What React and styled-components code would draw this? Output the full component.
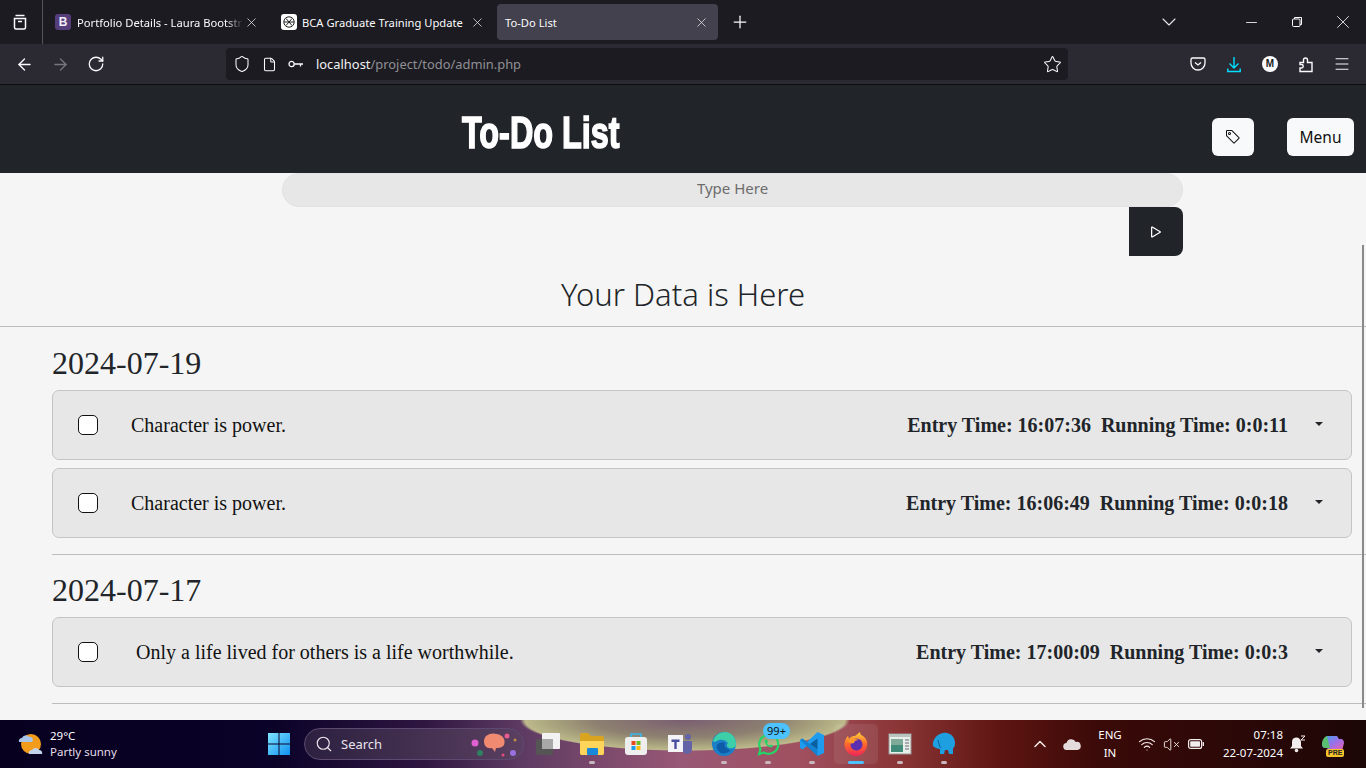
import styled, { createGlobalStyle } from "styled-components";
import {
  ArrowLeft,
  ArrowRight,
  RotateCw,
  Shield,
  File,
  Star,
  Menu as MenuIcon,
  ChevronDown,
  ChevronUp,
  Minus,
  X,
  Plus,
  Search as SearchIcon,
  Wifi,
  VolumeX,
} from "lucide-react";

const DATA = [
  {
    date: "2024-07-19",
    items: [
      { text: "Character is power.", entry: "16:07:36", run: "0:0:11" },
      { text: "Character is power.", entry: "16:06:49", run: "0:0:18" },
    ],
  },
  {
    date: "2024-07-17",
    items: [
      {
        text: "Only a life lived for others is a life worthwhile.",
        entry: "17:00:09",
        run: "0:0:3",
        indent: 5,
      },
    ],
  },
];

function App() {
  return (
    <>
      <GlobalStyle />
      <Screen>
        <TabBar>
          <ViewSlot>
            <svg width="18" height="18" viewBox="0 0 18 18" fill="none" stroke="#fbfbfe" strokeWidth="1.5">
              <path d="M3.5 5.5h11v9a1.5 1.5 0 0 1-1.5 1.5H5a1.5 1.5 0 0 1-1.5-1.5z" />
              <path d="M4.5 2.5h9" />
              <path d="M7 8.5h4" />
            </svg>
          </ViewSlot>
          <Tab>
            <BootstrapIcon>B</BootstrapIcon>
            <TabTitle $fade>Portfolio Details - Laura Bootstr</TabTitle>
            <X size={15} strokeWidth={1.2} color="#e8e8ea" />
          </Tab>
          <Tab>
            <ChatIcon>
              <svg width="14" height="14" viewBox="0 0 14 14" fill="none" stroke="#222" strokeWidth="1">
                <circle cx="7" cy="7" r="5.2" />
                <path d="M4 3.5l6 7M10 3.5l-6 7M2 7h10" />
              </svg>
            </ChatIcon>
            <TabTitle>BCA Graduate Training Update</TabTitle>
            <X size={15} strokeWidth={1.2} color="#e8e8ea" />
          </Tab>
          <Tab $active>
            <TabTitle>To-Do List</TabTitle>
            <X size={15} strokeWidth={1.2} color="#e8e8ea" />
          </Tab>
          <NewTab>
            <Plus size={20} strokeWidth={1.5} color="#fbfbfe" />
          </NewTab>
          <WindowControls>
            <WinButton $gap>
              <ChevronDown size={24} strokeWidth={1.1} color="#e8e8ea" />
            </WinButton>
            <WinButton>
              <Minus size={17} strokeWidth={1.2} color="#fbfbfe" />
            </WinButton>
            <WinButton>
              <svg width="12" height="12" viewBox="0 0 12 12" fill="none" stroke="#fbfbfe" strokeWidth="1">
                <rect x="1.5" y="3" width="7.5" height="7.5" rx="1" />
                <path d="M3.5 3V1.5h7v7H9" />
              </svg>
            </WinButton>
            <WinButton>
              <X size={22} strokeWidth={0.9} color="#fbfbfe" />
            </WinButton>
          </WindowControls>
        </TabBar>

        <ToolBar>
          <NavGroup>
            <NavButton>
              <ArrowLeft size={19} strokeWidth={1.7} color="#fbfbfe" />
            </NavButton>
            <NavButton>
              <ArrowRight size={19} strokeWidth={1.7} color="#77767c" />
            </NavButton>
            <NavButton>
              <RotateCw size={18} strokeWidth={1.7} color="#fbfbfe" />
            </NavButton>
          </NavGroup>
          <UrlBar>
            <Shield size={18} strokeWidth={1.4} color="#fbfbfe" />
            <File size={15} strokeWidth={1.7} color="#fbfbfe" />
            <svg width="16" height="10" viewBox="0 0 16 10" fill="none" stroke="#fbfbfe" strokeWidth="1.3">
              <circle cx="3.6" cy="5" r="2.6" />
              <path d="M6.2 5H15M12.5 5v2.5" />
            </svg>
            <Url>
              localhost<span>/project/todo/admin.php</span>
            </Url>
            <UrlStar>
              <Star size={19} strokeWidth={1.3} color="#fbfbfe" />
            </UrlStar>
          </UrlBar>
          <ToolIcons>
            <ToolIcon>
              <svg width="16" height="16" viewBox="0 0 16 16" fill="none" stroke="#fbfbfe" strokeWidth="1.3">
                <path d="M2.5 2h11A1.5 1.5 0 0 1 15 3.500V7a7 7 0 0 1-14 0V3.500A1.500 1.500 0 0 1 2.500 2z" />
                <path d="M5 6.500l3 2.500 3-2.500" />
              </svg>
            </ToolIcon>
            <ToolIcon>
              <svg width="16" height="17" viewBox="0 0 16 17" fill="none" stroke="#00ddff" strokeWidth="1.4">
                <path d="M8 1v10.500M3.500 7.500L8 12l4.500-4.500" />
                <path d="M1.800 12.500v3h12.400v-3" />
              </svg>
            </ToolIcon>
            <ToolIcon>
              <Avatar>M</Avatar>
            </ToolIcon>
            <ToolIcon>
              <svg width="16" height="17" viewBox="0 0 16 17" fill="none" stroke="#fbfbfe" strokeWidth="1.4">
                <path d="M2 6.500h3.500V4a2 2 0 1 1 4 0v2.500h4.500V15.500H2V12h1.500a1.700 1.700 0 0 0 0-3.500H2z" />
              </svg>
            </ToolIcon>
            <ToolIcon>
              <MenuIcon size={18} strokeWidth={1.3} color="#fbfbfe" />
            </ToolIcon>
          </ToolIcons>
        </ToolBar>

        <Header>
          <Brand>To-Do List</Brand>
          <TagButton>
            <svg width="16" height="16" viewBox="0 0 16 16" fill="#111">
              <path d="M6 4.500a1.500 1.500 0 1 1-3 0 1.500 1.500 0 0 1 3 0m-1 0a.5.5 0 1 0-1 0 .5.5 0 0 0 1 0" />
              <path d="M2 1h4.586a1 1 0 0 1 .707.293l7 7a1 1 0 0 1 0 1.414l-4.586 4.586a1 1 0 0 1-1.414 0l-7-7A1 1 0 0 1 1 6.586V2a1 1 0 0 1 1-1m0 5.586 7 7L13.586 9l-7-7H2z" />
            </svg>
          </TagButton>
          <MenuButton>Menu</MenuButton>
        </Header>

        <Main>
          <Scrollbar />
          <EntryForm>
            <EntryInput placeholder="Type Here" />
            <SubmitButton>
              <svg width="20" height="20" viewBox="0 0 16 16" fill="#fff">
                <path d="M10.804 8 5 4.633v6.734zm.792-.696a.802.802 0 0 1 0 1.392l-6.363 3.692C4.713 12.690 4 12.345 4 11.692V4.308c0-.653.713-.998 1.233-.696z" />
              </svg>
            </SubmitButton>
          </EntryForm>
          <Heading>Your Data is Here</Heading>
          <Rule />
          {DATA.map((group) => (
            <Group key={group.date}>
              <DateTitle>{group.date}</DateTitle>
              {group.items.map((item) => (
                <Card key={item.entry}>
                  <Check />
                  <CardText $indent={item.indent}>{item.text}</CardText>
                  <Times>
                    Entry Time: {item.entry}&nbsp;&nbsp;Running Time: {item.run}
                  </Times>
                  <Caret />
                </Card>
              ))}
              <GroupRule />
            </Group>
          ))}
        </Main>

        <Taskbar>
          <Weather>
            <svg width="26" height="26" viewBox="0 0 26 26">
              <circle cx="14" cy="13" r="10" fill="#f39c1c" />
              <path d="M2 11a3 3 0 0 1 3-4 4 4 0 0 1 7-1 3 3 0 0 1 3 5z" fill="#a9c6e8" />
              <path d="M12 23a3 3 0 0 1 3-4 4 4 0 0 1 7 0 3 3 0 0 1 3 4z" fill="#c3d4ea" />
            </svg>
            <WeatherText>
              <strong>29°C</strong>
              <span>Partly sunny</span>
            </WeatherText>
          </Weather>
          <StartSlot>
            <svg width="22" height="22" viewBox="0 0 22 22">
              <defs>
                <linearGradient id="win" x1="0" y1="0" x2="1" y2="1">
                  <stop offset="0" stopColor="#7fe6ff" />
                  <stop offset="1" stopColor="#0f90f0" />
                </linearGradient>
              </defs>
              <path d="M0 0h10.500v10.500H0zM11.500 0H22v10.500H11.500zM0 11.500h10.500V22H0zM11.500 11.500H22V22H11.500z" fill="url(#win)" />
            </svg>
          </StartSlot>
          <SearchBox>
            <SearchIcon size={18} strokeWidth={1.5} color="#f0eaf2" />
            <span>Search</span>
            <SearchArt>
              <svg width="50" height="28" viewBox="0 0 50 28">
                <path d="M14 11c0-6 7-9 13-7 6 1 9 6 7 11-2 3-6 3-8 3l-1 4-3-4c-5 1-8-2-8-7z" fill="#f08a70" />
                <circle cx="5" cy="13" r="3.500" fill="#e060d0" />
                <circle cx="37" cy="6" r="2.500" fill="#e85a90" />
                <circle cx="43" cy="23" r="3" fill="#9a70e0" />
                <circle cx="10" cy="23" r="3" fill="#2f8060" />
                <circle cx="33" cy="25" r="1.500" fill="#e84a80" />
                <circle cx="45" cy="10" r="1.500" fill="#c09040" />
              </svg>
            </SearchArt>
          </SearchBox>
          <Pinned>
            <AppSlot>
              <svg width="26" height="24" viewBox="0 0 26 24">
                <rect x="1" y="7" width="17" height="16" rx="2" fill="#555" />
                <rect x="7" y="1" width="18" height="16" rx="1" fill="#f2f2f2" />
                <rect x="7" y="7" width="11" height="10" fill="#a8a8a8" />
              </svg>
            </AppSlot>
            <AppSlot $dot>
              <svg width="26" height="24" viewBox="0 0 26 24">
                <path d="M1 3a2 2 0 0 1 2-2h6l3 3h11a2 2 0 0 1 2 2v15a2 2 0 0 1-2 2H3a2 2 0 0 1-2-2z" fill="#d9a520" />
                <path d="M1 9h24v12a2 2 0 0 1-2 2H3a2 2 0 0 1-2-2z" fill="#ffd45a" />
                <rect x="8" y="16" width="11" height="7" rx="1" fill="#1a88d8" />
              </svg>
            </AppSlot>
            <AppSlot>
              <svg width="24" height="24" viewBox="0 0 24 24">
                <path d="M7 5V2h10v3" fill="none" stroke="#35b8f0" strokeWidth="1.600" />
                <rect x="1" y="5" width="22" height="18" rx="3" fill="#eee" />
                <rect x="7.500" y="9" width="4" height="4" fill="#e8491d" />
                <rect x="12.500" y="9" width="4" height="4" fill="#6cbb2a" />
                <rect x="7.500" y="14" width="4" height="4" fill="#1c9ce8" />
                <rect x="12.500" y="14" width="4" height="4" fill="#fcbc10" />
              </svg>
            </AppSlot>
            <AppSlot>
              <svg width="26" height="24" viewBox="0 0 26 24">
                <circle cx="21" cy="5" r="3" fill="#6264a7" />
                <path d="M14 9h11v8a5 5 0 0 1-10 0z" fill="#6264a7" />
                <rect x="1" y="3" width="15" height="17" fill="#f4f4f8" />
                <path d="M4.500 7.500h8V10h-2.800v7H7.300v-7H4.500z" fill="#4b4da0" />
              </svg>
            </AppSlot>
            <AppSlot $dot>
              <svg width="24" height="24" viewBox="0 0 24 24">
                <circle cx="12" cy="12" r="12" fill="#1b7fc8" />
                <path d="M1 9C3 3 8 0 13 0c6 0 11 5 11 12 0 4-4 5-7 4-2-1-3-3-1-5-2-3-6-4-9-3-3 1-5 3-6 1z" fill="#3dd0a8" />
                <path d="M5 13c1-2 5-3 8-2-1 2 0 5 3 6 1 1 2 1 3 1-3 3-7 4-10 3-3-2-5-5-4-8z" fill="#0e5ca8" />
              </svg>
            </AppSlot>
            <AppSlot $dot>
              <svg width="24" height="24" viewBox="0 0 24 24" fill="none">
                <path d="M3 22l1.500-5A9.500 9.500 0 1 1 8 20.500z" stroke="#25d366" strokeWidth="2.200" />
                <path d="M8.500 8c0 4 3.500 7.500 7.500 7.500l1-2-2.500-1-1 1c-1.200-.6-2-1.500-2.500-2.500l1-1-1-2.500z" fill="#25d366" />
              </svg>
              <Badge>99+</Badge>
            </AppSlot>
            <AppSlot $dot>
              <svg width="24" height="24" viewBox="0 0 24 24">
                <path d="M17.500 0L24 3v18l-6.500 3L7 14l-4.500 3.500L0 16V8l2.500-1.500L7 10z" fill="#1f9cf0" />
                <path d="M17.500 6.500v11L10 12z" fill="#0a5f9e" />
                <path d="M0 8l2.500-1.500L17.500 18v6L0 8z" fill="#0e78c4" opacity="0.700" />
              </svg>
            </AppSlot>
            <AppSlot $active>
              <svg width="24" height="24" viewBox="0 0 24 24">
                <defs>
                  <linearGradient id="fox" x1="0.500" y1="0" x2="0.500" y2="1">
                    <stop offset="0" stopColor="#ffd23a" />
                    <stop offset="0.500" stopColor="#ff6a2a" />
                    <stop offset="1" stopColor="#f0245a" />
                  </linearGradient>
                </defs>
                <path d="M12 24A11.500 11.500 0 0 1 1 9c1-3 2-4 3-5l1 3c2-3 4-3 6-3l5-4c0 2 1 3 3 4 3 2 5 6 4 10-1 6-6 10-11 10z" fill="url(#fox)" />
                <circle cx="12.500" cy="12.500" r="6" fill="#5b2fb0" />
                <path d="M4 9c3-2 7-3 11-1-3 0-5 1-5 3-3 1-4 0-6-2z" fill="#ff9a2a" />
              </svg>
            </AppSlot>
            <AppSlot $dot>
              <svg width="24" height="22" viewBox="0 0 24 22">
                <rect x="1" y="1" width="22" height="20" fill="#e8eee8" stroke="#999" />
                <rect x="1" y="1" width="22" height="3" fill="#b8c4c0" />
                <rect x="3" y="6" width="12" height="13" fill="#3f8a78" />
                <rect x="3" y="6" width="12" height="6" fill="#7faa98" />
                <path d="M17 7h4M17 10h4M17 13h4M17 16h4" stroke="#667" strokeWidth="1.200" />
              </svg>
            </AppSlot>
            <AppSlot $dot>
              <svg width="24" height="24" viewBox="0 0 24 24">
                <path d="M11 1c6-1 12 3 12 10 0 3-1 5-2 5v6h-4l-1-4h-3l-1 4H8v-5c-2 0-5-1-7-3-1-5 3-12 10-13z" fill="#1e9fe0" />
                <path d="M6 8c1 3 1 6 3 8" stroke="#0c5f90" fill="none" />
              </svg>
            </AppSlot>
          </Pinned>
          <Tray>
            <TraySlot $width={32}>
              <ChevronUp size={20} strokeWidth={1.7} color="#f3ecec" />
            </TraySlot>
            <TraySlot $width={32}>
              <svg width="18" height="12" viewBox="0 0 18 12">
                <path d="M4 12a3.500 3.500 0 0 1-.5-7 5 5 0 0 1 9.300-1A4 4 0 0 1 14.500 12z" fill="#e4dcdc" />
              </svg>
            </TraySlot>
            <Lang>
              <span>ENG</span>
              <span>IN</span>
            </Lang>
            <TraySlot $width={24}>
              <Wifi size={18} strokeWidth={1.6} color="#f3ecec" />
            </TraySlot>
            <TraySlot $width={24}>
              <VolumeX size={17} strokeWidth={1.3} color="#f3ecec" />
            </TraySlot>
            <TraySlot $width={26}>
              <svg width="16" height="10" viewBox="0 0 16 10">
                <rect x="0.600" y="0.600" width="13" height="8.800" rx="2" fill="none" stroke="#f3ecec" strokeWidth="1.200" />
                <rect x="2.200" y="2.200" width="9.800" height="5.600" rx="0.800" fill="#f3ecec" />
                <rect x="14.600" y="3" width="1.400" height="4" rx="0.600" fill="#f3ecec" />
              </svg>
            </TraySlot>
            <Clock>
              <span>07:18</span>
              <span>22-07-2024</span>
            </Clock>
            <TraySlot $width={30}>
              <svg width="18" height="18" viewBox="0 0 18 18">
                <path d="M7 2.500a4.500 4.500 0 0 1 5 4.500v4l2 2.500H1l2-2.500V7a4.500 4.500 0 0 1 4-4.500z" fill="#f3ecec" />
                <circle cx="7.500" cy="15.500" r="1.800" fill="#f3ecec" />
                <path d="M12 1h4l-4 4h4" fill="none" stroke="#f3ecec" />
              </svg>
            </TraySlot>
            <TraySlot $width={40}>
              <Copilot>
                <svg width="24" height="18" viewBox="0 0 24 18">
                  <defs>
                    <linearGradient id="cop" x1="0" y1="0" x2="1" y2="1">
                      <stop offset="0" stopColor="#38a8e8" />
                      <stop offset="0.500" stopColor="#9a70e8" />
                      <stop offset="1" stopColor="#f060b0" />
                    </linearGradient>
                  </defs>
                  <path d="M6 1h10l2 3h2c2 0 3 2 3 4l-2 8H8l-2-3H4c-2 0-3-2-3-4z" fill="url(#cop)" />
                  <path d="M1 9c0-4 2-7 5-8l3 12H4c-2 0-3-2-3-4z" fill="#58c070" />
                </svg>
                <PreTag>PRE</PreTag>
              </Copilot>
            </TraySlot>
          </Tray>
        </Taskbar>
      </Screen>
    </>
  );
}
export default App;

const UI_FONT = `"Noto Sans", "Open Sans", sans-serif`;

const GlobalStyle = createGlobalStyle`
  html, body {
    margin: 0;
    height: 768px;
    overflow: hidden;
  }
  * {
    box-sizing: border-box;
  }
`;

const Screen = styled.div`
  width: 1366px;
  height: 768px;
  display: flex;
  flex-direction: column;
  overflow: hidden;
  background: #f5f5f5;
`;

const TabBar = styled.div`
  height: 44px;
  flex: none;
  display: flex;
  align-items: center;
  background: #1c1b22;
  font-family: ${UI_FONT};
`;

const ViewSlot = styled.div`
  width: 43px;
  height: 44px;
  flex: none;
  display: flex;
  align-items: center;
  justify-content: center;
  padding-right: 3px;
  border-right: 1px solid #55545a;
`;

const Tab = styled.div`
  width: ${({ $active }) => ($active ? "221px" : "226px")};
  height: 36px;
  margin-left: ${({ $active }) => ($active ? "2px" : "0")};
  flex: none;
  display: flex;
  align-items: center;
  gap: 5px;
  padding: 0 ${({ $active }) => ($active ? "9px" : "10px")} 0 ${({ $active }) => ($active ? "8px" : "12px")};
  border-radius: 4px;
  background: ${({ $active }) => ($active ? "#42414d" : "transparent")};
  color: #fbfbfe;
`;

const TabTitle = styled.span`
  flex: 1;
  min-width: 0;
  margin-right: -4px;
  white-space: nowrap;
  font-size: 11.2px;
  ${({ $fade }) =>
    $fade && "mask-image: linear-gradient(90deg, #000 90%, transparent 100%);"}
`;

const BootstrapIcon = styled.span`
  width: 16px;
  height: 16px;
  flex: none;
  margin-right: 1px;
  border-radius: 3px;
  background: #563d7c;
  color: #f2edf8;
  font: 700 12px/16px "Liberation Sans", sans-serif;
  text-align: center;
`;

const ChatIcon = styled.span`
  width: 16px;
  height: 16px;
  flex: none;
  display: flex;
  align-items: center;
  justify-content: center;
  border-radius: 3px;
  background: #fff;
`;

const NewTab = styled.div`
  width: 44px;
  height: 36px;
  flex: none;
  display: flex;
  align-items: center;
  justify-content: center;
`;

const WindowControls = styled.div`
  margin-left: auto;
  display: flex;
  align-items: center;
`;

const WinButton = styled.div`
  width: 46px;
  height: 44px;
  margin-right: ${({ $gap }) => ($gap ? "36px" : "0")};
  display: flex;
  align-items: center;
  justify-content: center;
`;

const ToolBar = styled.div`
  height: 41px;
  flex: none;
  display: flex;
  align-items: center;
  background: #2b2a33;
  border-bottom: 1px solid #0c0c0f;
  font-family: ${UI_FONT};
`;

const NavGroup = styled.div`
  width: 226px;
  flex: none;
  display: flex;
  padding-left: 6px;
`;

const NavButton = styled.div`
  width: 36px;
  height: 32px;
  display: flex;
  align-items: center;
  justify-content: center;
`;

const UrlBar = styled.div`
  width: 842px;
  height: 32px;
  flex: none;
  display: flex;
  align-items: center;
  gap: 11px;
  padding: 0 6px 0 7px;
  border-radius: 4px;
  background: #1c1b22;
`;

const Url = styled.div`
  margin-left: 1px;
  font-size: 12.9px;
  color: #f0f0f4;
  span {
    color: #8f8f94;
  }
`;

const UrlStar = styled.div`
  margin-left: auto;
  display: flex;
`;

const ToolIcons = styled.div`
  flex: 1;
  display: flex;
  justify-content: flex-end;
  padding-right: 6px;
`;

const ToolIcon = styled.div`
  width: 36px;
  height: 32px;
  display: flex;
  align-items: center;
  justify-content: center;
`;

const Avatar = styled.span`
  width: 16px;
  height: 16px;
  border-radius: 50%;
  background: #fbfbfe;
  color: #1c1b22;
  font: 700 10px/16px "Liberation Sans", sans-serif;
  text-align: center;
`;

const Header = styled.header`
  height: 88px;
  flex: none;
  display: flex;
  align-items: center;
  padding: 16px 12px 0 462px;
  background: #212529;
`;

const Brand = styled.h1`
  margin: 0 0 8px;
  font: 700 44px/1 "Liberation Sans", sans-serif;
  white-space: nowrap;
  color: #fff;
  -webkit-text-stroke: 1.6px #fff;
  transform: scaleX(0.735);
  transform-origin: left center;
`;

const TagButton = styled.button`
  width: 42px;
  height: 38px;
  margin-left: auto;
  display: flex;
  align-items: center;
  justify-content: center;
  border: none;
  border-radius: 6px;
  background: #f8f9fa;
`;

const MenuButton = styled.button`
  width: 67px;
  height: 38px;
  margin-left: 33px;
  border: none;
  border-radius: 6px;
  background: #f8f9fa;
  color: #111;
  font: 400 15.5px ${UI_FONT};
`;

const Main = styled.main`
  position: relative;
  flex: 1;
  min-height: 0;
  overflow: hidden;
  background: #f5f5f5;
`;

const Scrollbar = styled.div`
  position: absolute;
  top: 72px;
  right: 2px;
  width: 2px;
  height: 463px;
  background: #8a8a8a;
`;

const EntryForm = styled.div`
  width: 901px;
  margin-left: 282px;
  display: flex;
  flex-direction: column;
  align-items: flex-end;
`;

const EntryInput = styled.input`
  width: 100%;
  height: 34px;
  padding: 0 0 5px;
  border: 1px solid #e2e2e6;
  border-radius: 17px;
  outline: none;
  background: #e7e7e7;
  font: 400 15px ${UI_FONT};
  text-align: center;
  &::placeholder {
    color: #6c6c6c;
    opacity: 1;
  }
`;

const SubmitButton = styled.button`
  width: 54px;
  height: 49px;
  display: flex;
  align-items: center;
  justify-content: center;
  border: none;
  border-radius: 0 8px 8px 0;
  background: #212529;
`;

const Heading = styled.h2`
  margin: 16px 0 0;
  font: 300 31px/44px ${UI_FONT};
  color: #212529;
  text-align: center;
`;

const Rule = styled.div`
  height: 1px;
  margin: 10px 0 17px;
  background: #bdbdbd;
`;

const Group = styled.section`
  padding-left: 52px;
`;

const DateTitle = styled.h3`
  margin: 16px 0 8px;
  font: 400 32px/38px "Liberation Serif", serif;
  color: #212529;
`;

const Card = styled.div`
  width: 1300px;
  height: 70px;
  margin-bottom: 8px;
  display: flex;
  align-items: center;
  padding-left: 25px;
  border: 1px solid #c4c4c4;
  border-radius: 7px;
  background: #e7e7e7;
`;

const Check = styled.span`
  width: 20px;
  height: 20px;
  flex: none;
  border: 1px solid #111;
  border-radius: 5px;
  background: #fff;
`;

const CardText = styled.div`
  margin-left: ${({ $indent = 0 }) => 33 + $indent}px;
  font: 400 20px "Liberation Serif", serif;
  color: #111;
`;

const Times = styled.div`
  margin-left: auto;
  font: 700 20px "Liberation Serif", serif;
  color: #212529;
`;

const Caret = styled.span`
  width: 8px;
  height: 0;
  margin: -3px 28px 0 27px;
  border-top: 4px solid #212529;
  border-left: 4px solid transparent;
  border-right: 4px solid transparent;
`;

const GroupRule = styled.div`
  height: 1px;
  margin-top: 16px;
  background: #bdbdbd;
`;

const Taskbar = styled.footer`
  height: 48px;
  flex: none;
  display: flex;
  align-items: center;
  color: #fff;
  font-family: ${UI_FONT};
  background:
    radial-gradient(ellipse 165px 31px at 685px 0, #7a5f72 0, #8d8070 55%, #aaa57e 82%, #bdb98c 97%, transparent 100%),
    linear-gradient(90deg, #07001f 0, #0a0228 270px, #2d1540 420px, #5d3a62 520px, #985876 680px, #a0505f 800px, #8a3535 900px, #5e1512 1000px, #3a0a08 1100px, #1c0606 1366px);
`;

const Weather = styled.div`
  width: 268px;
  flex: none;
  display: flex;
  align-items: center;
  gap: 7px;
  padding-left: 17px;
`;

const WeatherText = styled.div`
  display: flex;
  flex-direction: column;
  font-size: 11.500px;
  line-height: 16px;
  strong {
    font-weight: 400;
  }
  span {
    color: #e4dfe8;
  }
`;

const StartSlot = styled.div`
  width: 36px;
  flex: none;
  display: flex;
  justify-content: center;
  margin-left: -7px;
`;

const SearchBox = styled.div`
  width: 220px;
  height: 32px;
  flex: none;
  margin-left: 7px;
  display: flex;
  align-items: center;
  gap: 8px;
  padding-left: 10px;
  border-radius: 16px;
  border: 1px solid #5e4a70;
  background: linear-gradient(90deg, #2c2040, #5a3f60);
  font-size: 13px;
  color: #e8e4ec;
`;

const SearchArt = styled.div`
  margin-left: auto;
  margin-right: 3px;
  display: flex;
`;

const Pinned = styled.div`
  display: flex;
  margin-left: 2px;
`;

const AppSlot = styled.div`
  position: relative;
  width: 44px;
  height: 40px;
  flex: none;
  display: flex;
  align-items: center;
  justify-content: center;
  border-radius: 5px;
  background: ${({ $active }) => ($active ? "rgba(255, 255, 255, 0.08)" : "transparent")};
  &::after {
    content: "";
    display: ${({ $dot, $active }) => ($dot || $active ? "block" : "none")};
    position: absolute;
    bottom: 0;
    left: 50%;
    width: ${({ $active }) => ($active ? "16px" : "6px")};
    height: 3px;
    margin-left: ${({ $active }) => ($active ? "-8px" : "-3px")};
    border-radius: 2px;
    background: ${({ $active }) => ($active ? "#4cc2ff" : "#c8b8bc")};
  }
`;

const Badge = styled.span`
  position: absolute;
  top: -1px;
  left: 17px;
  width: 27px;
  height: 16px;
  border-radius: 8px;
  background: #4cc2ff;
  color: #111;
  font-size: 11px;
  line-height: 16px;
  text-align: center;
`;

const Tray = styled.div`
  margin-left: auto;
  padding-right: 13px;
  display: flex;
  align-items: center;
`;

const TraySlot = styled.div`
  width: ${({ $width }) => $width}px;
  flex: none;
  display: flex;
  align-items: center;
  justify-content: center;
`;

const Lang = styled.div`
  width: 44px;
  display: flex;
  flex-direction: column;
  align-items: center;
  font-size: 11.500px;
  line-height: 18px;
  margin-right: 3px;
`;

const Clock = styled.div`
  width: 74px;
  display: flex;
  flex-direction: column;
  align-items: flex-end;
  font-size: 11.500px;
  line-height: 18px;
`;

const Copilot = styled.div`
  position: relative;
  display: flex;
`;

const PreTag = styled.span`
  position: absolute;
  left: 5px;
  bottom: -4px;
  padding: 0 2px;
  border-radius: 2px;
  background: #f5c32c;
  color: #222;
  font: 700 7px/8px "Liberation Sans", sans-serif;
`;
